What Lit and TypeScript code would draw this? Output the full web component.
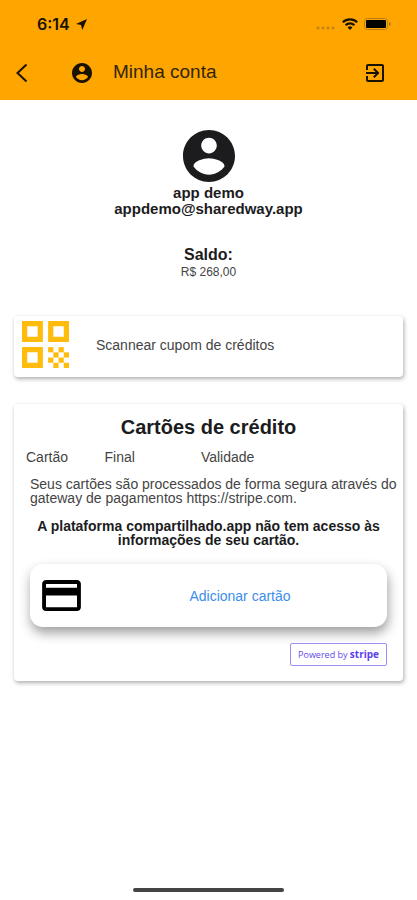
import { LitElement, html, css, svg } from "lit";
import { customElement } from "lit/decorators.js";

const accountPath =
  "M12 2C6.48 2 2 6.48 2 12s4.48 10 10 10 10-4.48 10-10S17.52 2 12 2zm0 3c1.66 0 3 1.34 3 3s-1.34 3-3 3-3-1.34-3-3 1.34-3 3-3zm0 14.2c-2.5 0-4.71-1.28-6-3.22.03-1.99 4-3.08 6-3.08 1.99 0 5.97 1.09 6 3.08-1.29 1.94-3.5 3.22-6 3.22z";

const finders = [
  [0, 0],
  [5, 0],
  [0, 5],
];
const modules = [
  [5, 5], [7, 5],
  [6, 6], [8, 6],
  [5, 7], [7, 7],
  [6, 8], [8, 8],
];

@customElement("app-root")
export class AppRoot extends LitElement {
  static styles = css`
    :host {
      display: flex;
      flex-direction: column;
      min-height: 100vh;
      background: #fff;
      color: #1c1c1e;
      font-family: "Liberation Sans", Arial, sans-serif;
      font-size: 14px;
      line-height: 14px;
    }
    * {
      box-sizing: border-box;
    }
    svg {
      display: block;
      flex: none;
    }
    h1,
    h2,
    p {
      margin: 0;
    }
    button {
      font: inherit;
      color: inherit;
      background: none;
      border: 0;
      padding: 0;
      cursor: pointer;
    }
    header {
      background: #ffa500;
      color: #1a1200;
    }
    .status {
      display: flex;
      align-items: center;
      justify-content: space-between;
      height: 48px;
      padding: 0 26px 0 37px;
    }
    .time,
    .signals {
      display: flex;
      align-items: center;
    }
    .time {
      gap: 6px;
      font: 600 16px/20px Inter, sans-serif;
    }
    .signals {
      gap: 6px;
    }
    .bar {
      display: flex;
      align-items: center;
      height: 52px;
      padding: 0 30px 2px 12px;
    }
    .bar h1 {
      flex: 1;
      margin-left: 19px;
      padding-bottom: 2px;
      font-size: 19px;
      line-height: 24px;
      font-weight: 400;
      color: #33250a;
    }
    .who {
      margin-left: 38px;
    }
    main {
      flex: 1;
      padding: 30px 14px 24px;
    }
    .profile {
      display: flex;
      flex-direction: column;
      align-items: center;
      text-align: center;
    }
    .name {
      margin-top: 3px;
      font-size: 15px;
      line-height: 16px;
      font-weight: 700;
    }
    .profile h2 {
      margin-top: 28px;
      font-size: 16px;
      line-height: 20px;
    }
    .amount {
      font-size: 12px;
      line-height: 14px;
      color: #444;
    }
    .card {
      border-radius: 4px;
      background: #fff;
      box-shadow: 1px 2px 4px rgba(0, 0, 0, 0.32);
    }
    .coupon {
      display: flex;
      align-items: center;
      gap: 27px;
      width: 100%;
      height: 61px;
      margin-top: 37px;
      padding: 0 8px 4px;
      color: #444;
      text-align: left;
    }
    .cards {
      margin-top: 27px;
      padding: 11px 16px 15px;
    }
    .cards h2 {
      font-size: 20px;
      line-height: 24px;
      text-align: center;
    }
    table {
      width: 100%;
      margin: 10px 0 12px -4px;
      border-collapse: collapse;
      table-layout: fixed;
      color: #444;
    }
    th {
      padding: 0;
      font-weight: 400;
      text-align: left;
      line-height: 16px;
    }
    .brand {
      width: 22%;
    }
    .last {
      width: 27%;
    }
    .secure {
      margin-right: -12px;
      color: #444;
    }
    .notice {
      margin: 14px 0 17px;
      font-weight: 700;
      text-align: center;
    }
    .add {
      display: flex;
      align-items: center;
      width: 100%;
      height: 63px;
      padding: 0 12px;
      border-radius: 13px;
      background: #fff;
      color: #000;
      box-shadow: 1px 6px 12px rgba(0, 0, 0, 0.38);
    }
    .add span {
      flex: 1;
      padding-left: 24px;
      color: #3b8eea;
    }
    .powered {
      display: block;
      width: fit-content;
      margin: 16px 0 0 auto;
      padding: 0 7px;
      border: 1px solid #9d8ff6;
      border-radius: 2px;
      font: 400 9px/20px "Open Sans", sans-serif;
      color: #5f49ee;
      text-decoration: none;
    }
    .powered b {
      font-size: 10px;
      font-weight: 700;
      color: #5a3ff0;
    }
    .home {
      align-self: center;
      width: 36%;
      height: 4px;
      margin-bottom: 8px;
      border-radius: 2px;
      background: #444;
    }
  `;

  private qr() {
    return html`<svg width="47" height="47" viewBox="0 0 9 9" fill="#ffbc0d" aria-hidden="true">
      ${finders.map(([x, y]) => svg`<path fill-rule="evenodd" d="M${x} ${y}h4v4h-4zM${x + 1} ${y + 1}v2h2v-2z"></path>`)}
      ${modules.map(([x, y]) => svg`<rect x=${x} y=${y} width="1" height="1"></rect>`)}
    </svg>`;
  }

  render() {
    return html`
      <header>
        <div class="status">
          <div class="time">
            <span>6:14</span>
            <svg width="11" height="11" viewBox="0 0 11 11" fill="currentColor" aria-hidden="true">
              <path d="M11 0L6.300 11 5 6 0 5z"></path>
            </svg>
          </div>
          <div class="signals">
            <svg width="20" height="14" viewBox="0 0 20 14" fill="#c08417" aria-hidden="true">
              <circle cx="2" cy="11" r="1.5"></circle>
              <circle cx="7" cy="11" r="1.5"></circle>
              <circle cx="12" cy="11" r="1.5"></circle>
              <circle cx="17" cy="11" r="1.5"></circle>
            </svg>
            <svg width="16" height="12" viewBox="0 0 16 12" fill="none" stroke="currentColor" stroke-width="2.2" aria-hidden="true">
              <path d="M.8 4.3a10.2 10.2 0 0 1 14.4 0"></path>
              <path d="M3.6 7.2a6.2 6.2 0 0 1 8.8 0"></path>
              <path d="M8 12L5.6 9.5a3.4 3.4 0 0 1 4.8 0z" fill="currentColor" stroke="none"></path>
            </svg>
            <svg width="27" height="12" viewBox="0 0 27 12" aria-hidden="true">
              <rect x=".5" y=".5" width="23" height="11" rx="3" fill="none" stroke="#b87d12"></rect>
              <rect x="2" y="2" width="20" height="8" rx="1" fill="#000"></rect>
              <path d="M25 4c2 .6 2 3.400 0 4z" fill="#9c6d10"></path>
            </svg>
          </div>
        </div>
        <div class="bar">
          <button aria-label="Voltar">
            <svg width="20" height="22" viewBox="0 0 20 22" fill="none" stroke="currentColor" stroke-width="2" aria-hidden="true">
              <path d="M14.500 2.500L5.500 11l9 8.500"></path>
            </svg>
          </button>
          <div class="who">
            <svg width="24" height="24" viewBox="0 0 24 24" fill="currentColor" aria-hidden="true">
              <path d=${accountPath}></path>
            </svg>
          </div>
          <h1>Minha conta</h1>
          <button aria-label="Sair">
            <svg width="24" height="24" viewBox="0 0 24 24" fill="currentColor" aria-hidden="true">
              <path
                d="M10.09 15.59L11.5 17l5-5-5-5-1.410 1.410L12.670 11H3v2h9.670l-2.580 2.590zM19 3H5c-1.110 0-2 .9-2 2v4h2V5h14v14H5v-4H3v4c0 1.100.89 2 2 2h14c1.100 0 2-.9 2-2V5c0-1.100-.9-2-2-2z"
              ></path>
            </svg>
          </button>
        </div>
      </header>
      <main>
        <section class="profile">
          <svg width="52" height="52" viewBox="2 2 20 20" fill="currentColor" aria-hidden="true">
            <path d=${accountPath}></path>
          </svg>
          <p class="name">app demo<br />appdemo@sharedway.app</p>
          <h2>Saldo:</h2>
          <p class="amount">R$ 268,00</p>
        </section>
        <button class="card coupon">${this.qr()}<span>Scannear cupom de créditos</span></button>
        <section class="card cards">
          <h2>Cartões de crédito</h2>
          <table>
            <thead>
              <tr>
                <th class="brand" scope="col">Cartão</th>
                <th class="last" scope="col">Final</th>
                <th scope="col">Validade</th>
              </tr>
            </thead>
          </table>
          <p class="secure">
            Seus cartões são processados de forma segura através do gateway de pagamentos https://stripe.com.
          </p>
          <p class="notice">A plataforma compartilhado.app não tem acesso às informações de seu cartão.</p>
          <button class="add">
            <svg width="39" height="31" viewBox="2 4 20 16" fill="currentColor" aria-hidden="true">
              <path
                d="M20 4H4c-1.110 0-1.990.89-1.990 2L2 18c0 1.110.89 2 2 2h16c1.110 0 2-.89 2-2V6c0-1.110-.89-2-2-2zm0 14H4v-6h16v6zm0-10H4V6h16v2z"
              ></path>
            </svg>
            <span>Adicionar cartão</span>
          </button>
          <a class="powered" href="https://stripe.com">Powered by <b>stripe</b></a>
        </section>
      </main>
      <div class="home"></div>
    `;
  }
}
